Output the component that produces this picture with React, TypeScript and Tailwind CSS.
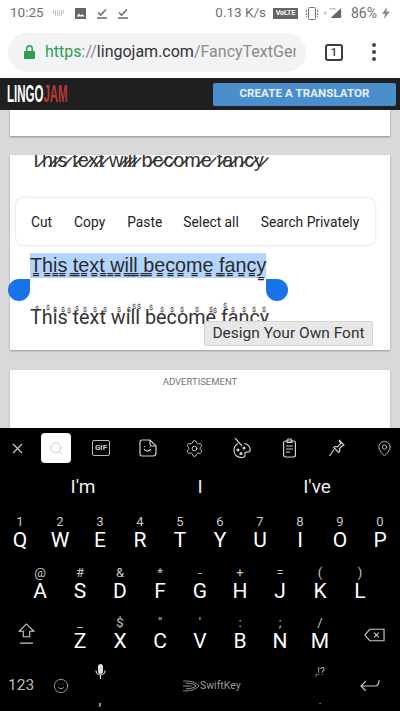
import React from 'react';
import { X, Search, Settings, MapPin, Smile } from 'lucide-react';

const row1 = [['1', 'Q'], ['2', 'W'], ['3', 'E'], ['4', 'R'], ['5', 'T'], ['6', 'Y'], ['7', 'U'], ['8', 'I'], ['9', 'O'], ['0', 'P']];
const row2 = [['@', 'A'], ['#', 'S'], ['&', 'D'], ['*', 'F'], ['-', 'G'], ['+', 'H'], ['=', 'J'], ['(', 'K'], [')', 'L']];
const row3 = [['_', 'Z'], ['$', 'X'], ['"', 'C'], ["'", 'V'], [':', 'B'], [';', 'N'], ['/', 'M']];

const sentence = 'This text will become fancy';
const slashed = sentence.split('').map((c) => (c === ' ' ? c : c + '\u0337')).join('');
const doubled = sentence.split('').map((c) => c + '\u0333').join('');

// tiny marks sitting above the last line: [x in card, y in card]
const marks = [
  [25, 150], [36, 149], [43, 151], [51, 151], [57, 152], [65, 150], [73, 151], [83, 151], [93, 151],
  [107, 151], [117, 151], [122, 148], [127, 148], [139, 149], [150, 151], [160, 151], [170, 151],
  [185, 151], [199, 151], [203, 152], [213, 147], [221, 151], [232, 151], [242, 151], [252, 151],
];

const Key = ({ top, letter }: { top: string; letter: string }) => (
  <div className="w-10 flex flex-col items-center">
    <span className="h-[15px] text-[13px] leading-[15px] text-[#c8c8c8]">{top}</span>
    <span className="h-[22px] text-[21px] leading-[22px] text-white">{letter}</span>
  </div>
);

const CheckDone = () => (
  <svg width="12" height="12" viewBox="0 0 12 12" fill="none" stroke="#707070" strokeWidth="1.6">
    <path d="M2 5.500l2.500 2.500L10 2.500" />
    <path d="M1 11h10" />
  </svg>
);

const App: React.FC = () => {
  return (
    <div className="w-[400px] h-[711px] flex flex-col overflow-hidden bg-white font-['Roboto',sans-serif]">
      {/* Status bar */}
      <div className="h-[26px] flex items-center justify-between pl-[10px] pr-[10px] text-[#707070] shrink-0">
        <div className="flex items-center">
          <span className="w-[33px] text-[13.500px] leading-none whitespace-nowrap">10:25</span>
          <svg className="ml-[10px]" width="12" height="7" viewBox="0 0 12 7" fill="none" stroke="#8a8a8a" strokeWidth="1">
            <path d="M0 1h12M0 3h12M2 5h8" strokeDasharray="1 1" />
          </svg>
          <svg className="ml-[10px]" width="11" height="11" viewBox="0 0 11 11">
            <path d="M0 0h11v11H0z" fill="#666" />
            <path d="M1.500 8.500l2.500-3 2 2 1.500-1.500 2 2.500z" fill="#fff" />
          </svg>
          <span className="ml-[10px] flex"><CheckDone /></span>
          <span className="ml-[9px] flex"><CheckDone /></span>
        </div>
        <div className="flex items-center">
          <span className="text-[13.500px] leading-none">0.13 K/s</span>
          <span className="ml-[7px] w-[25px] h-[11px] bg-[#666] text-white text-[7px] font-bold leading-[11px] text-center">VoLTE</span>
          <svg className="ml-[7px]" width="14" height="13" viewBox="0 0 14 13" fill="none" stroke="#777" strokeWidth="1">
            <rect x="3.500" y="0.500" width="7" height="12" rx="1" />
            <path d="M1.500 3v7M12.500 3v7" strokeDasharray="2 1" />
          </svg>
          <svg className="ml-[5px]" width="18" height="14" viewBox="0 0 22 14">
            <path d="M21 1v12H8z" fill="#666" />
            <path d="M0 6h3M0 8h3" stroke="#999" strokeWidth="1" />
            <path d="M7 2h8" stroke="#999" strokeWidth="2" strokeDasharray="1 1" />
          </svg>
          <span className="ml-[9px] text-[14px] leading-none">86%</span>
          <svg className="ml-[5px]" width="8" height="12" viewBox="0 0 8 12">
            <path d="M5 0L0 7h3l-1 5 6-7.500H4.500z" fill="#8a8a8a" />
          </svg>
        </div>
      </div>

      {/* Browser toolbar */}
      <div className="h-[52px] flex items-center pl-2 shrink-0">
        <div className="w-[298px] h-[39px] rounded-full bg-[#f1f3f4] flex items-center pl-4 overflow-hidden">
          <svg width="11" height="14" viewBox="0 0 11 14" fill="#2e9e4f">
            <path d="M1 6h9a1 1 0 011 1v6a1 1 0 01-1 1H1a1 1 0 01-1-1V7a1 1 0 011-1z" />
            <path d="M2.800 6V3.500a2.700 2.700 0 015.400 0V6" fill="none" stroke="#2e9e4f" strokeWidth="1.500" />
          </svg>
          <span className="ml-[10px] text-[16px] leading-none whitespace-nowrap w-[251px] overflow-hidden">
            <span className="text-[#2e9e4f]">https</span>
            <span className="text-[#8a8a8a]">://</span>
            <span className="text-[#333]">lingojam.com</span>
            <span className="text-[#8a8a8a]">/FancyTextGene</span>
          </span>
        </div>
        <div className="ml-[19px] w-[18px] h-[17px] border-2 border-[#3c3c3c] rounded-[3px] flex items-center justify-center text-[11px] font-medium leading-none text-[#333]">1</div>
        <div className="ml-[29px] flex flex-col gap-[3px]">
          <span className="w-1 h-1 rounded-full bg-[#444]" />
          <span className="w-1 h-1 rounded-full bg-[#444]" />
          <span className="w-1 h-1 rounded-full bg-[#444]" />
        </div>
      </div>

      {/* Site header */}
      <div className="h-8 bg-[#1f1f1f] flex items-center justify-between pl-[7px] pr-1 shrink-0">
        <span className="text-[23px] leading-none font-bold font-['Liberation_Sans',sans-serif] scale-x-[0.5] origin-left whitespace-nowrap">
          <span className="text-white">LINGO</span>
          <span className="text-[#b5383a]">JAM</span>
        </span>
        <div className="w-[183px] h-[23px] bg-[#4a8fcb] rounded-[2px] flex items-center justify-center text-[#e8f0f8] text-[11.500px] font-bold tracking-[0.1px]">
          CREATE A TRANSLATOR
        </div>
      </div>

      {/* Page body */}
      <div className="flex-1 min-h-0 bg-[#d9d9d9] px-[10px] overflow-hidden">
        <div className="h-[26px] bg-white shadow-[0_1px_2px_rgba(0,0,0,0.35)]" />

        <div className="relative mt-[19px] h-[195px] bg-white shadow-[0_1px_2px_rgba(0,0,0,0.3)] pl-5">
          <div className="h-[18px] overflow-hidden">
            <div className="-mt-[8px] text-[19.800px] leading-[28px] text-[#333] whitespace-nowrap">{slashed}</div>
          </div>
          <div className="mt-[80px] w-fit h-[25px] bg-[#b3d4fc] text-[19.800px] leading-[25px] text-[#2a2a2a] whitespace-nowrap">{doubled}</div>
          <div className="mt-[27px] text-[19.800px] leading-[26px] text-[#333] whitespace-nowrap">
            {sentence}
          </div>

          {/* Selection menu */}
          <div className="absolute left-[6px] top-[43px] w-[359px] h-[47px] pt-[2px] bg-white rounded-lg shadow-[0_0_3px_rgba(0,0,0,0.2)] flex items-center pl-[15px] text-[13.800px] text-[#222] whitespace-nowrap">
            <span>Cut</span>
            <span className="ml-[22px]">Copy</span>
            <span className="ml-[22px]">Paste</span>
            <span className="ml-[21px]">Select all</span>
            <span className="ml-[22px]">Search Privately</span>
          </div>

          {/* Selection handles */}
          <span className="absolute left-[-2px] top-[124px] w-[22px] h-[22px] bg-[#1a73e8] rounded-full rounded-tr-none" />
          <span className="absolute left-[256px] top-[124px] w-[22px] h-[22px] bg-[#1a73e8] rounded-full rounded-tl-none" />

          {/* small marks over the last line */}
          {marks.map(([x, y], i) => (
            <span key={i} className="absolute text-[7px] leading-[8px] font-medium text-[#444]" style={{ left: x, top: y }}>$</span>
          ))}

          <div className="absolute left-[194px] top-[166px] w-[169px] h-[25px] bg-[#e8e8e8] border border-[#d4d4d4] rounded-[2px] flex items-center justify-center text-[15.500px] text-[#333] whitespace-nowrap">
            Design Your Own Font
          </div>
        </div>

        <div className="mt-5 h-[100px] bg-white shadow-[0_1px_2px_rgba(0,0,0,0.2)] pt-[6px] text-center text-[9.500px] leading-[12px] text-[#777]">
          ADVERTISEMENT
        </div>
      </div>

      {/* Keyboard */}
      <div className="h-[283px] bg-black shrink-0 flex flex-col">
        <div className="h-10 flex items-center text-[#d0d0d0]">
          <X className="ml-[9px] w-[17px] h-[17px]" strokeWidth={1.5} />
          <div className="ml-[15px] w-[30px] h-[30px] bg-white rounded-[4px] flex items-center justify-center">
            <Search className="w-[15px] h-[15px] text-[#c4c4c4]" strokeWidth={1.5} />
          </div>
          <div className="ml-[21px] w-[18px] h-[16px] border border-[#bbb] rounded-[2px] flex items-center justify-center text-[8px] font-bold leading-none">GIF</div>
          <svg className="ml-[29px]" width="18" height="18" viewBox="0 0 18 18" fill="none" stroke="#d0d0d0" strokeWidth="1.200">
            <path d="M3 1h8l6 6v7a3 3 0 01-3 3H3a2 2 0 01-2-2V3a2 2 0 012-2z" />
            <path d="M11 1v4a2 2 0 002 2h4" />
            <path d="M5 10a4 4 0 007 0M5.500 7v1M11 7.500v1" />
          </svg>
          <Settings className="ml-[28px] w-[19px] h-[19px]" strokeWidth={1.2} />
          <svg className="ml-[29px]" width="18" height="21" viewBox="0 0 18 21" fill="none" stroke="#d0d0d0" strokeWidth="1.200">
            <path d="M5 5.500C2 7 .8 10 1 13c.3 4 4 7 8.500 6.500 2.500-.3 3-1.500 2.300-3-.5-1.300 .5-2.300 2-2.300 2 0 3.500-.7 3.500-2.700 0-3-3-5.500-6-6" />
            <path d="M2 0l7 8" />
            <circle cx="5" cy="12" r="1" fill="#d0d0d0" />
            <circle cx="8" cy="15.500" r="1" fill="#d0d0d0" />
            <circle cx="11" cy="10" r="1" fill="#d0d0d0" />
          </svg>
          <svg className="ml-[32px]" width="13" height="20" viewBox="0 0 13 20" fill="none" stroke="#d0d0d0" strokeWidth="1.200">
            <rect x="0.600" y="3" width="11.800" height="16" rx="2" />
            <path d="M4 3l1-2h3l1 2v1.500H4zM3 8h7M3 11h7M3 14h4" />
          </svg>
          <svg className="ml-[33px]" width="16" height="18" viewBox="0 0 16 18" fill="none" stroke="#d0d0d0" strokeWidth="1.200">
            <path d="M10 1l5 5-1.500 .5-3 3 .2 3-1 1-5-5 1-1 3 .2 3-3zM5 10.500L.5 17" />
          </svg>
          <MapPin className="ml-[31px] w-[17px] h-[19px]" strokeWidth={1.2} />
        </div>

        <div className="h-[37px] pt-[2px] flex items-center text-[19px] text-[#eee]">
          <span className="w-[166px] text-center">I'm</span>
          <span className="w-[68px] text-center">I</span>
          <span className="w-[166px] text-center">I've</span>
        </div>

        <div className="mt-[9px] flex">
          {row1.map(([t, l]) => <Key key={l} top={t} letter={l} />)}
        </div>
        <div className="mt-[14px] pl-5 flex">
          {row2.map(([t, l]) => <Key key={l} top={t} letter={l} />)}
        </div>
        <div className="mt-[13px] flex items-end">
          <svg className="ml-[17px] mb-[7px]" width="19" height="22" viewBox="0 0 20 24" fill="none" stroke="#ccc" strokeWidth="1.200">
            <path d="M10 1L2 9h4.500v6h7V9H18zM3 22h14" />
          </svg>
          <div className="ml-[24px] flex">
            {row3.map(([t, l]) => <Key key={l} top={t} letter={l} />)}
          </div>
          <svg className="ml-[24px] mb-[10px]" width="21" height="14" viewBox="0 0 22 14" fill="none" stroke="#ccc" strokeWidth="1.200">
            <path d="M6 1h15v12H6L1 7zM10.500 4.500l5 5M15.500 4.500l-5 5" />
          </svg>
        </div>
        <div className="mt-[8px] flex-1 flex items-center text-[#bbb]">
          <span className="ml-[8px] w-6 text-[15.500px] whitespace-nowrap">123</span>
          <Smile className="ml-[21px] w-4 h-4" strokeWidth={1.2} />
          <div className="ml-[23px] w-4 h-[44px] flex flex-col items-center justify-between">
            <svg width="11" height="16" viewBox="0 0 11 16" fill="none" stroke="#ddd" strokeWidth="1.200">
              <rect x="3" y="0" width="5" height="10" rx="2.500" fill="#ddd" stroke="none" />
              <path d="M1 6.500a4.500 4.500 0 009 0M5.500 11v4" />
            </svg>
            <span className="text-[15px] leading-none text-[#ddd]">,</span>
          </div>
          <svg className="ml-[74px]" width="18" height="12" viewBox="0 0 19 12" fill="none" stroke="#999" strokeWidth="1">
            <path d="M1 1c6-1 14 1 17 5-4 4-11 6-17 5M4 3c5 0 9 1 11 3-3 2-6 3-11 3M1 6h9" />
          </svg>
          <span className="w-10 text-[10.500px] text-[#999] whitespace-nowrap">SwiftKey</span>
          <div className="ml-[72px] w-4 h-[44px] flex flex-col items-center justify-between text-[10px]">
            <span>,!?</span>
            <span>.</span>
          </div>
          <svg className="ml-[32px]" width="20" height="13" viewBox="0 0 21 13" fill="none" stroke="#ccc" strokeWidth="1.200">
            <path d="M20 1c0 3-1 6-4 6H1M6 2L1 7l5 5" />
          </svg>
        </div>
      </div>
    </div>
  );
};

export default App;
